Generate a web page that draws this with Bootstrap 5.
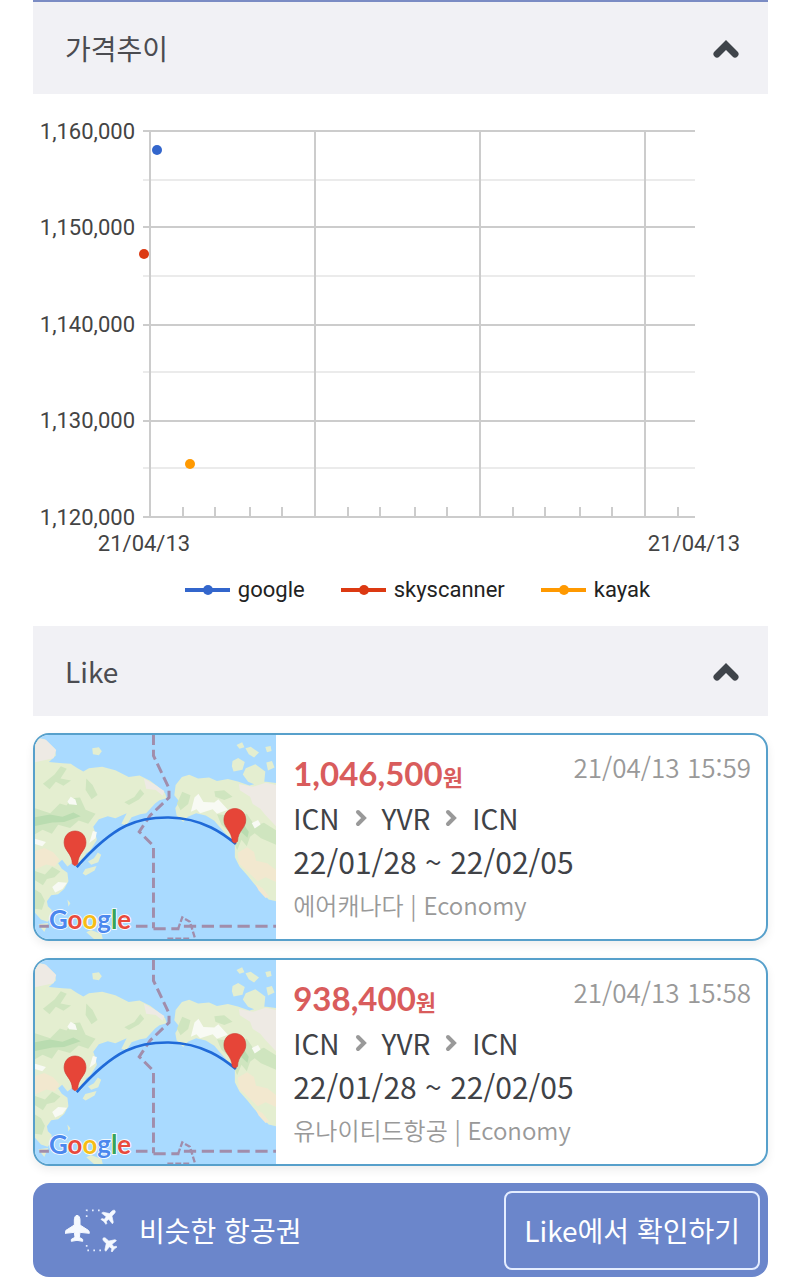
<!DOCTYPE html>
<html lang="ko">
<head>
<meta charset="utf-8">
<meta name="viewport" content="width=device-width, initial-scale=1">
<title>가격추이</title>
<link href="https://cdn.jsdelivr.net/npm/bootstrap@5.3.0/dist/css/bootstrap.min.css" rel="stylesheet">
<style>
  body { font-family: "Noto Sans CJK KR", sans-serif; color: #404247; background: #fff; }
  .page { padding: 0 32px 0 33px; }
  .panel-top { border-top: 2px solid #7b8cc4; }
  .panel-toggle { height: 90px; padding: 0 28px 0 32px; background: #f1f1f5; color: #4b4c51; font-size: 28px; line-height: 40px; border: 0; }
  .panel-top .panel-toggle { height: 92px; }
  .trend text { font-family: Roboto, sans-serif; font-size: 22px; fill: #444; }
  .legend-row { gap: 36px; height: 64px; padding: 0 0 8px 34px; font-family: Roboto, sans-serif; font-size: 22px; line-height: 28px; color: #222; }
  .legend-item { gap: 8px; }
  .fare { border: 2px solid #57a0cb; border-radius: 16px; height: 208px; box-shadow: 0 4px 10px rgba(0,0,0,.07); color: #404247; }
  .fare-map { width: 33%; }
  .fare-map text { font-family: Lato, sans-serif; font-size: 78px; font-weight: 700; stroke: #fff; stroke-width: 5px; paint-order: stroke; }
  .fare-body { padding: 13px 15px 0 17px; }
  .price { font-family: Lato, sans-serif; font-weight: 700; font-size: 33px; line-height: 50px; color: #d95c5c; }
  .fare-head { height: 49px; }
  .won { font-family: "Noto Sans CJK KR", sans-serif; font-size: 22px; }
  .stamp { font-size: 26px; line-height: 38px; color: #999; font-weight: 350; }
  .route { font-size: 28px; line-height: 42px; gap: 15px; }
  .period { font-size: 30px; line-height: 44px; }
  .airline { font-size: 24px; line-height: 44px; color: #999; font-weight: 350; }
  .similar { height: 94px; padding: 0 8px 0 32px; border-radius: 16px; background: #6b86cb; color: #fff; font-size: 28px; line-height: 40px; }
  .similar-label { gap: 22px; }
  .check { height: 79px; padding: 0 18px; border: 2px solid #e4edff; border-radius: 8px; background: transparent; color: #fff; font-size: 28px; line-height: 40px; }
  .stack { gap: 17px; padding-top: 17px; }
</style>
</head>
<body>
<svg width="0" height="0" class="d-block" aria-hidden="true">
  <symbol id="pacific" viewBox="42 42 729 618">
    <rect x="42" y="42" width="729" height="618" fill="#a9daff"/>
    <path fill="#e4eed0" d="M42 52L70 55 103 85 105 105 84 124 125 128 150 130 168 142 188 153 205 143 245 139 285 149 325 170 358 165 390 181 412 198 435 218 440 234 418 240 405 250 378 279 360 282 334 291 318 316 303 311 319 279 285 294 262 288 235 297 218 320 224 337 229 360 208 393 196 400 183 435 166 440 153 430 140 440 124 420 112 430 123 447 140 459 143 485 130 508 112 524 91 527 78 545 81 560 92 571 93 593 80 607 60 600 42 580Z"/>
    <path fill="#e4eed0" d="M467 194L486 170 508 163 535 174 568 171 592 182 625 176 655 183 690 195 735 183 771 188V545L748 540 725 516 704 492 684 467 660 440 646 412 646 375 629 353 607 329 584 302 558 286 529 279 504 290 490 306 470 286 466 263 478 244 463 225ZM215 83L235 80 244 92 235 104 217 101ZM651 73L668 65 675 80 660 84ZM678 83L694 78 719 96 704 111 688 101ZM639 121L656 112 676 124 669 148 642 153 637 137ZM679 143L708 131 738 153 735 184 710 194 686 184 670 162ZM741 126L758 121 766 141 746 150ZM738 79L754 76 757 91 743 95ZM232 398L242 405 233 427 212 435 202 425 220 415ZM194 448L228 439 222 452 195 467 186 461Z"/>
    <path fill="#cfe5bf" d="M42 264L88 279 117 250 137 256 153 234 178 232 195 269 225 281 203 311 174 301 148 324 112 314 93 341 65 329 42 343ZM66 190L101 162 120 137 138 145 119 174 151 180 128 196 105 184 86 207ZM197 174L216 194 231 224 213 237 195 209ZM360 206L372 220 356 238 326 254 312 246 342 230ZM94 441L119 455 101 473 78 478 66 497 42 482V454L72 464ZM42 510L60 521 72 544 63 571 42 568ZM487 214L512 225 505 251 482 270 471 250ZM584 213L614 210 639 229 614 239 587 229ZM592 282L632 286 682 281 707 317 734 308 771 331V375L725 355 706 340 692 350 682 379 666 359 653 391 631 337 605 313Z"/>
    <path fill="#b9dcb0" d="M42 291L87 283 125 290 158 277 180 288 130 306 94 307 42 318ZM674 315L688 335 684 353 665 336Z"/>
    <path fill="#eeeae4" d="M42 50L75 57 106 88 98 113 42 125ZM658 191L701 199 739 187 771 194V319L737 283 723 266 700 251 692 229 661 210ZM371 174L401 191 433 212 428 226 407 209 378 205Z"/>
    <path fill="#f2e8cf" d="M42 393L70 384 97 397 116 419 102 440 76 434 42 449ZM655 398L683 382 704 396 710 423 744 430 771 451V487L739 473 715 485 681 452 658 431ZM708 493L729 505 750 531 739 535 718 513Z"/>
    <path fill="#f8faf4" d="M150 229L164 238 169 254 145 252 140 244ZM524 232L536 220 551 245 584 247 596 237 625 269 592 281 579 267 541 279 530 267 513 275ZM217 333L229 336 225 355 206 369ZM42 356L75 366 64 379 42 372ZM94 502L112 487 139 489 125 508 103 519ZM697 309L716 300 724 313 706 325Z"/>
    <path fill="#e4eed0" d="M197 639L211 632 243 644 247 660H221ZM140 540L149 551 143 561ZM52 615L82 611 70 638Z"/>
    <g fill="none" stroke="#a18dab" stroke-width="9">
      <path stroke-dasharray="31 14" d="M400 42V105L447 204V232L390 286 357 335 400 378V627"/>
      <path stroke-dasharray="37 17" d="M347 621H382M400 628H478M492 621H771"/>
      <path stroke-width="7" stroke-dasharray="18 6" d="M474 630L487 594 510 607 525 655M442 658H510"/>
      <path d="M55 621H84"/>
    </g>
    <path d="M168 442C285 310 355 291 446 292C550 293 616 345 649 372" fill="none" stroke="#206ad8" stroke-width="8"/>
    <path id="pin" d="M163 333C143 333 130 348 130 368C130 393 154 400 155 432Q163 443 171 432C172 400 196 393 196 368C196 348 183 333 163 333Z" fill="#e64538" stroke="#cf3a32" stroke-width="2"/>
    <use href="#pin" x="483" y="-68"/>
  </symbol>
  <symbol id="caret-up" viewBox="0 0 28 22"><path d="M5 17L14 8L23 17" fill="none" stroke="#3f444a" stroke-width="7" stroke-linecap="round" stroke-linejoin="miter"/></symbol>
  <symbol id="caret-next" viewBox="0 0 12 18"><path d="M3 3L9 9L3 15" fill="none" stroke="#999" stroke-width="4" stroke-linecap="round" stroke-linejoin="miter"/></symbol>
</svg>

<main class="page">
  <section>
    <h2 class="panel-top m-0">
      <button class="panel-toggle w-100 d-flex align-items-center justify-content-between" type="button" aria-expanded="true">
        <span>가격추이</span><svg width="28" height="22" aria-hidden="true"><use href="#caret-up"/></svg>
      </button>
    </h2>
    <svg class="trend d-block w-100" viewBox="33 94 735 468" role="img" aria-label="가격추이 차트">
      <g stroke="#ebebeb" stroke-width="2"><path d="M143 180H695M143 276H695M143 372H695M143 468H695"/></g>
      <g stroke="#ccc" stroke-width="2"><path d="M143 131H695M143 227H695M143 325H695M143 421H695M143 517H695M150 131V517M315 131V517M480 131V517M645 131V517M183 507V517M215 507V517M250 507V517M282 507V517M348 507V517M380 507V517M415 507V517M447 507V517M513 507V517M545 507V517M580 507V517M612 507V517M678 507V517"/></g>
      <circle cx="157" cy="150" r="5" fill="#3366cc"/>
      <circle cx="144" cy="254" r="5" fill="#dc3912"/>
      <circle cx="190" cy="464" r="5" fill="#ff9900"/>
      <g text-anchor="end">
        <text x="135" y="139">1,160,000</text>
        <text x="135" y="235">1,150,000</text>
        <text x="135" y="332">1,140,000</text>
        <text x="135" y="428">1,130,000</text>
        <text x="135" y="525">1,120,000</text>
      </g>
      <g text-anchor="middle">
        <text x="144" y="551">21/04/13</text>
        <text x="694" y="551">21/04/13</text>
      </g>
    </svg>
    <div class="legend-row d-flex justify-content-center align-items-center">
      <span class="legend-item d-flex align-items-center"><svg width="45" height="12" aria-hidden="true"><path d="M0 6H45" stroke="#3366cc" stroke-width="4"/><circle cx="23" cy="6" r="5" fill="#3366cc"/></svg>google</span>
      <span class="legend-item d-flex align-items-center"><svg width="45" height="12" aria-hidden="true"><path d="M0 6H45" stroke="#dc3912" stroke-width="4"/><circle cx="23" cy="6" r="5" fill="#dc3912"/></svg>skyscanner</span>
      <span class="legend-item d-flex align-items-center"><svg width="45" height="12" aria-hidden="true"><path d="M0 6H45" stroke="#ff9900" stroke-width="4"/><circle cx="23" cy="6" r="5" fill="#ff9900"/></svg>kayak</span>
    </div>
  </section>

  <section>
    <h2 class="m-0">
      <button class="panel-toggle w-100 d-flex align-items-center justify-content-between" type="button" aria-expanded="true">
        <span>Like</span><svg width="28" height="22" aria-hidden="true"><use href="#caret-up"/></svg>
      </button>
    </h2>
    <div class="stack d-flex flex-column">
      <article class="fare d-flex overflow-hidden">
        <svg class="fare-map h-100 flex-shrink-0" viewBox="42 42 729 618" preserveAspectRatio="xMidYMid slice" role="img" aria-label="ICN - YVR">
          <use href="#pacific" x="42" y="42" width="729" height="618"/>
          <text x="84" y="630"><tspan fill="#4b88ee">G</tspan><tspan fill="#e84a3d">o</tspan><tspan fill="#f6bd18">o</tspan><tspan fill="#4b88ee">g</tspan><tspan fill="#38a457">l</tspan><tspan fill="#e84a3d">e</tspan></text>
        </svg>
        <div class="fare-body flex-grow-1">
          <div class="fare-head d-flex justify-content-between align-items-start">
            <div class="price">1,046,500<span class="won">원</span></div>
            <time class="stamp">21/04/13 15:59</time>
          </div>
          <div class="route d-flex align-items-center">ICN <svg width="12" height="18" aria-hidden="true"><use href="#caret-next"/></svg> YVR <svg width="12" height="18" aria-hidden="true"><use href="#caret-next"/></svg> ICN</div>
          <div class="period">22/01/28 ~ 22/02/05</div>
          <div class="airline">에어캐나다 | Economy</div>
        </div>
      </article>
      <article class="fare d-flex overflow-hidden">
        <svg class="fare-map h-100 flex-shrink-0" viewBox="42 42 729 618" preserveAspectRatio="xMidYMid slice" role="img" aria-label="ICN - YVR">
          <use href="#pacific" x="42" y="42" width="729" height="618"/>
          <text x="84" y="630"><tspan fill="#4b88ee">G</tspan><tspan fill="#e84a3d">o</tspan><tspan fill="#f6bd18">o</tspan><tspan fill="#4b88ee">g</tspan><tspan fill="#38a457">l</tspan><tspan fill="#e84a3d">e</tspan></text>
        </svg>
        <div class="fare-body flex-grow-1">
          <div class="fare-head d-flex justify-content-between align-items-start">
            <div class="price">938,400<span class="won">원</span></div>
            <time class="stamp">21/04/13 15:58</time>
          </div>
          <div class="route d-flex align-items-center">ICN <svg width="12" height="18" aria-hidden="true"><use href="#caret-next"/></svg> YVR <svg width="12" height="18" aria-hidden="true"><use href="#caret-next"/></svg> ICN</div>
          <div class="period">22/01/28 ~ 22/02/05</div>
          <div class="airline">유나이티드항공 | Economy</div>
        </div>
      </article>
      <div class="similar d-flex align-items-center justify-content-between">
        <div class="similar-label d-flex align-items-center">
          <svg width="52" height="44" viewBox="134 115 156 132" aria-hidden="true">
            <g fill="#f5f9ff">
              <path id="plane" d="M170 137C165 137 162 144 162 151V166L137 182Q134 184 134 191L162 188 164 203 153 209V215L170 212 187 215V209L177 203 179 188 207 191Q207 184 204 182L179 166V151C179 144 176 137 170 137Z" stroke="#f5f9ff" stroke-width="3" stroke-linejoin="round"/>
              <use href="#plane" transform="translate(266 140) rotate(45) scale(.62) translate(-170 -177)"/>
              <use href="#plane" transform="translate(266 223) rotate(-45) scale(.62) translate(-170 -177)"/>
            </g>
            <path d="M199 142V122H244M199 226V242H244" fill="none" stroke="#e4edff" stroke-width="5" stroke-dasharray="5 13"/>
          </svg>
          <span>비슷한 항공권</span>
        </div>
        <button class="check" type="button">Like에서 확인하기</button>
      </div>
    </div>
  </section>
</main>
<script src="https://cdn.jsdelivr.net/npm/bootstrap@5.3.0/dist/js/bootstrap.bundle.min.js"></script>
</body>
</html>
